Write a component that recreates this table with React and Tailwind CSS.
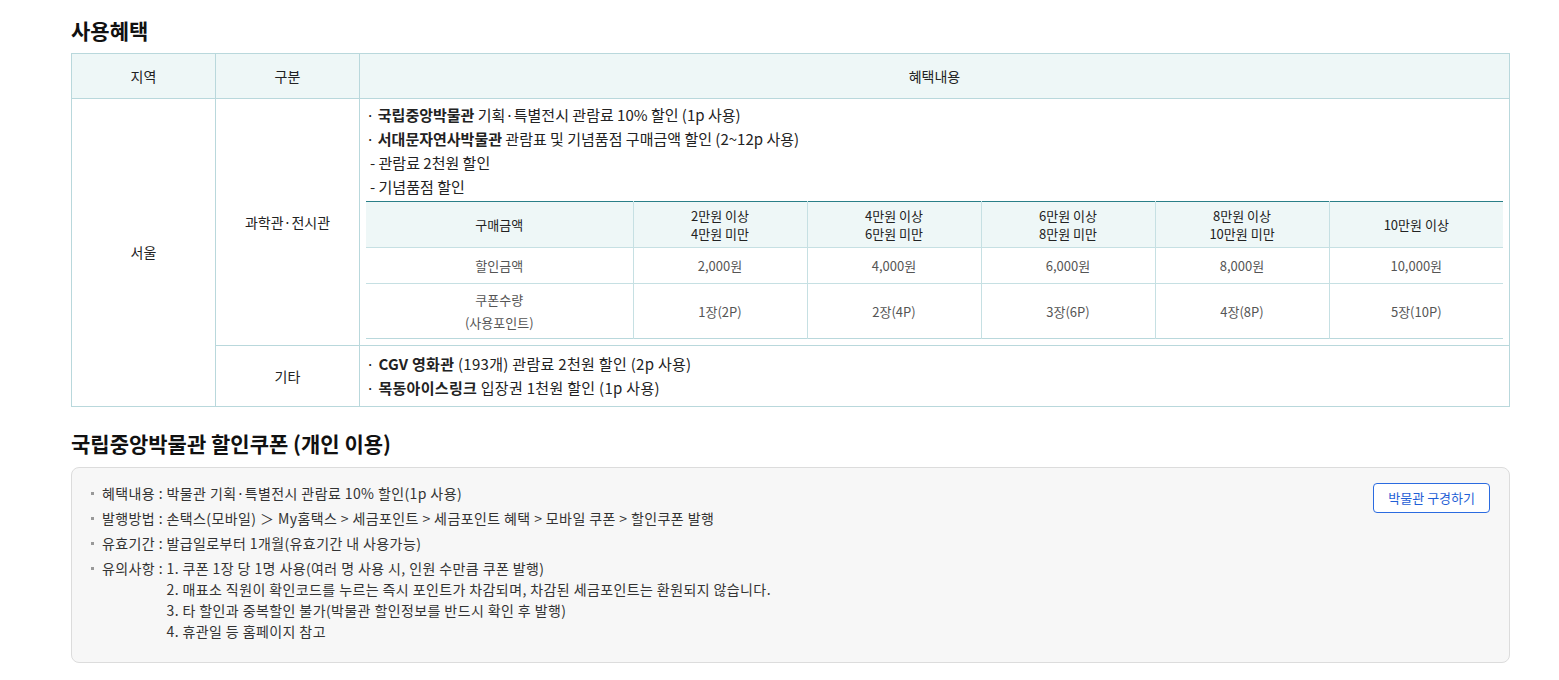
export default function App() {
  const font = { fontFamily: '"Noto Sans CJK KR", "Noto Sans", sans-serif' };
  const cols = [
    { h: ["2만원 이상", "4만원 미만"], a: "2,000원", c: "1장(2P)" },
    { h: ["4만원 이상", "6만원 미만"], a: "4,000원", c: "2장(4P)" },
    { h: ["6만원 이상", "8만원 미만"], a: "6,000원", c: "3장(6P)" },
    { h: ["8만원 이상", "10만원 미만"], a: "8,000원", c: "4장(8P)" },
    { h: ["10만원 이상"], a: "10,000원", c: "5장(10P)" },
  ];
  const bd = "border-[#b9d8dc]";
  return (
    <div className="bg-white w-[1559px] h-[680px] text-[#222]" style={font}>
      <div className="ml-[71px] w-[1439px] pt-[16px]">
        <h2 className="text-[21px] font-bold leading-[28px] text-[#111]">사용혜택</h2>
        <table className={`mt-[9px] w-full border-collapse border ${bd} text-[14px]`}>
          <thead>
            <tr className="bg-[#eef7f7] h-[45px]">
              <th className={`w-[144px] border ${bd} font-normal`}>지역</th>
              <th className={`w-[144px] border ${bd} font-normal`}>구분</th>
              <th className={`border ${bd} font-normal`}>혜택내용</th>
            </tr>
          </thead>
          <tbody>
            <tr>
              <td rowSpan={2} className={`border ${bd} text-center`}>서울</td>
              <td className={`border ${bd} text-center`}>과학관·전시관</td>
              <td className={`border ${bd} px-[6px] pt-[4px] pb-[6px]`}>
                <div className="text-[15px] leading-[24px]">
                  <div>· <b>국립중앙박물관</b> 기획·특별전시 관람료 10% 할인 (1p 사용)</div>
                  <div>· <b>서대문자연사박물관</b> 관람표 및 기념품점 구매금액 할인 (2~12p 사용)</div>
                  <div className="pl-[4px]">- 관람료 2천원 할인</div>
                  <div className="pl-[4px]">- 기념품점 할인</div>
                </div>
                <table className="mt-[2px] w-full table-fixed border-collapse text-[13px] border-t border-t-[#2a7f88] border-b border-b-[#b9d8dc]">
                  <thead>
                    <tr className="bg-[#eef7f7] h-[46px] leading-[18px] text-[#222]">
                      <th className="border-b border-[#c6e0e3] font-normal">구매금액</th>
                      {cols.map((c, i) => (
                        <th key={i} className="w-[174px] border-l border-b border-[#c6e0e3] font-normal">
                          {c.h.map((t, j) => (<div key={j}>{t}</div>))}
                        </th>
                      ))}
                    </tr>
                  </thead>
                  <tbody className="text-[#555]">
                    <tr className="h-[36px]">
                      <td className="border-b border-[#c6e0e3] text-center">할인금액</td>
                      {cols.map((c, i) => (
                        <td key={i} className="border-l border-b border-[#c6e0e3] text-center">{c.a}</td>
                      ))}
                    </tr>
                    <tr className="h-[55px] leading-[23px]">
                      <td className="text-center">쿠폰수량<br />(사용포인트)</td>
                      {cols.map((c, i) => (
                        <td key={i} className="border-l border-[#c6e0e3] text-center">{c.c}</td>
                      ))}
                    </tr>
                  </tbody>
                </table>
              </td>
            </tr>
            <tr>
              <td className={`border ${bd} text-center`}>기타</td>
              <td className={`border ${bd} px-[6px] py-[6px] text-[15px] leading-[24px] tracking-[0.3px]`}>
                <div>· <b>CGV 영화관</b> (193개) 관람료 2천원 할인 (2p 사용)</div>
                <div>· <b>목동아이스링크</b> 입장권 1천원 할인 (1p 사용)</div>
              </td>
            </tr>
          </tbody>
        </table>

        <h2 className="mt-[22px] text-[21px] font-bold leading-[28px] text-[#111]">국립중앙박물관 할인쿠폰 (개인 이용)</h2>
        <div className="mt-[10px] rounded-[8px] border border-[#dcdcdc] bg-[#f7f7f7] pl-[19px] pr-[19px] pt-[15px] pb-[20px] flex justify-between text-[14px] text-[#333]">
          <ul className="flex flex-col gap-[4px] leading-[21px] tracking-[0.4px]">
            {[
              ["혜택내용", ["박물관 기획·특별전시 관람료 10% 할인(1p 사용)"]],
              ["발행방법", ["손택스(모바일) ＞ My홈택스 > 세금포인트 > 세금포인트 혜택 > 모바일 쿠폰 > 할인쿠폰 발행"]],
              ["유효기간", ["발급일로부터 1개월(유효기간 내 사용가능)"]],
              ["유의사항", [
                "1. 쿠폰 1장 당 1명 사용(여러 명 사용 시, 인원 수만큼 쿠폰 발행)",
                "2. 매표소 직원이 확인코드를 누르는 즉시 포인트가 차감되며, 차감된 세금포인트는 환원되지 않습니다.",
                "3. 타 할인과 중복할인 불가(박물관 할인정보를 반드시 확인 후 발행)",
                "4. 휴관일 등 홈페이지 참고",
              ]],
            ].map(([label, lines], i) => (
              <li key={i} className="flex">
                <span className="w-[11px] flex items-start pt-[9px]">
                  <span className="block w-[3px] h-[3px] bg-[#999]"></span>
                </span>
                <span className="whitespace-pre">{label} : </span>
                <div>
                  {lines.map((l, j) => (<div key={j}>{l}</div>))}
                </div>
              </li>
            ))}
          </ul>
          <button className="self-start h-[30px] px-[14px] rounded-[4px] border border-[#2b6be0] bg-white text-[#1f5fd6] text-[13px]">
            박물관 구경하기
          </button>
        </div>
      </div>
    </div>
  );
}
